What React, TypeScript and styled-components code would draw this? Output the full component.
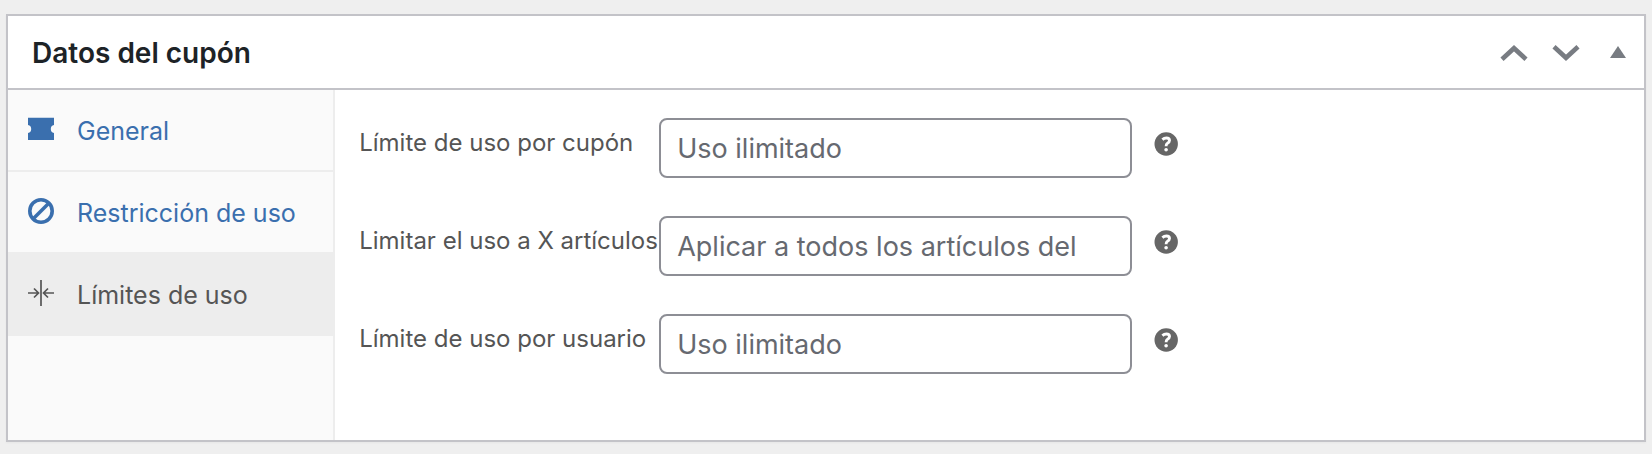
import React, { useState } from "react";
import styled, { createGlobalStyle } from "styled-components";

const GlobalStyle = createGlobalStyle`
  *, *::before, *::after { box-sizing: border-box; }
  body {
    margin: 0;
    background: #efefef;
    color: #555;
    font-family: Inter, "Liberation Sans", sans-serif;
    font-size: 26px;
  }
`;

const Page = styled.main`
  padding: 14px 6px 12px;
`;

const Panel = styled.section`
  background: #fff;
  border: 2px solid #c3c3c8;
  box-shadow: 0 1px 2px rgba(0, 0, 0, 0.04);
`;

const PanelHeader = styled.header`
  display: flex;
  align-items: center;
  justify-content: space-between;
  height: 74px;
  padding: 2px 0 0 24px;
  border-bottom: 2px solid #c3c3c8;
`;

const Title = styled.h2`
  margin: 0;
  color: #1d2327;
  font-size: 28px;
  line-height: 36px;
  font-weight: 600;
`;

const Actions = styled.div`
  display: flex;
`;

const IconButton = styled.button`
  display: flex;
  align-items: center;
  justify-content: center;
  width: 52px;
  height: 52px;
  padding: 0;
  border: 0;
  background: none;
  color: #787c82;
  cursor: pointer;
`;

const PanelBody = styled.div`
  display: flex;
  min-height: 350px;
`;

const Tabs = styled.ul`
  flex: 0 0 20%;
  min-width: 320px;
  margin: 0;
  padding: 0;
  list-style: none;
  background: #fafafa;
  border-right: 2px solid #ededed;
`;

const TabLink = styled.a<{ $active: boolean }>`
  display: flex;
  align-items: center;
  gap: 23px;
  height: 82px;
  padding: 2px 20px 0;
  border-bottom: 2px solid #ededed;
  background: ${(p) => (p.$active ? "#ededed" : "transparent")};
  color: ${(p) => (p.$active ? "#555" : "#3a6fae")};
  font-size: 25px;
  line-height: 36px;
  text-decoration: none;
  white-space: nowrap;

  svg {
    flex: none;
    margin-bottom: 4px;
  }
`;

const Form = styled.form`
  flex: 1;
  display: flex;
  flex-direction: column;
  gap: 38px;
  padding: 28px 24px;
`;

const Field = styled.div`
  display: grid;
  grid-template-columns: 300px minmax(0, 473px) auto;
  align-items: start;
`;

const Label = styled.label`
  padding-top: 8px;
  font-size: 24px;
  line-height: 34px;
  white-space: nowrap;
`;

const NumberInput = styled.input`
  width: 100%;
  height: 60px;
  padding: 0 16px;
  border: 2px solid #8d8e95;
  border-radius: 8px;
  background: #fff;
  color: #2c3338;
  font-family: inherit;
  font-size: 27px;

  &::placeholder {
    color: #666970;
    opacity: 1;
  }
`;

const HelpButton = styled.button`
  display: flex;
  margin: 14px 0 0 22px;
  padding: 0;
  border: 0;
  background: none;
  color: #666;
  cursor: help;
`;

const TicketIcon = () => (
  <svg width="26" height="26" viewBox="0 0 26 26" fill="currentColor" aria-hidden="true">
    <path d="M0 1.700h26v7.400a4.100 4.100 0 0 0 0 8V24H0v-6.900a4.100 4.100 0 0 0 0-8z" />
  </svg>
);

const BanIcon = () => (
  <svg width="26" height="26" viewBox="0 0 26 26" fill="none" stroke="currentColor" strokeWidth="3.6" aria-hidden="true">
    <circle cx="13" cy="13" r="11.2" />
    <path d="M5.5 20.5l15-15" />
  </svg>
);

const LimitIcon = () => (
  <svg width="26" height="26" viewBox="0 0 26 26" fill="none" stroke="currentColor" strokeWidth="1.7" aria-hidden="true">
    <path d="M13 0v26M0 13h10M6 8.5l4.5 4.5L6 17.5M26 13H16M20 8.5L15.5 13l4.500 4.500" />
  </svg>
);

const ChevronIcon = ({ down = false }: { down?: boolean }) => (
  <svg width="28" height="16" viewBox="0 0 28 16" fill="none" stroke="currentColor" strokeWidth="4.600" aria-hidden="true">
    <path d={down ? "M2 1.800L14 12.800L26 1.800" : "M2 14.200L14 3.200L26 14.200"} />
  </svg>
);

const TriangleIcon = () => (
  <svg width="16" height="14" viewBox="0 0 16 14" fill="currentColor" aria-hidden="true">
    <path d="M8 0l8 12H0z" />
  </svg>
);

const HelpIcon = () => (
  <svg width="24" height="24" viewBox="0 0 24 24" aria-hidden="true">
    <circle cx="12.200" cy="12" r="11.700" fill="currentColor" />
    <path
      d="M8.400 7.600Q10.200 6 12.400 6Q15.500 6 15.500 8.600Q15.500 10.100 13.500 11.200Q12.100 12 12.100 14.200"
      fill="none"
      stroke="#fff"
      strokeWidth="2.900"
    />
    <circle cx="12.100" cy="17.700" r="1.800" fill="#fff" />
  </svg>
);

const tabs = [
  { id: "general", text: "General", Icon: TicketIcon },
  { id: "restriccion", text: "Restricción de uso", Icon: BanIcon },
  { id: "limites", text: "Límites de uso", Icon: LimitIcon },
];

const fields = [
  { id: "usage_limit", label: "Límite de uso por cupón", placeholder: "Uso ilimitado" },
  { id: "limit_items", label: "Limitar el uso a X artículos", placeholder: "Aplicar a todos los artículos del" },
  { id: "limit_user", label: "Límite de uso por usuario", placeholder: "Uso ilimitado" },
];

export default function App() {
  const [active, setActive] = useState("limites");

  return (
    <>
      <GlobalStyle />
      <Page>
        <Panel>
          <PanelHeader>
            <Title>Datos del cupón</Title>
            <Actions>
              <IconButton type="button" aria-label="Subir">
                <ChevronIcon />
              </IconButton>
              <IconButton type="button" aria-label="Bajar">
                <ChevronIcon down />
              </IconButton>
              <IconButton type="button" aria-label="Plegar panel">
                <TriangleIcon />
              </IconButton>
            </Actions>
          </PanelHeader>
          <PanelBody>
            <Tabs>
              {tabs.map(({ id, text, Icon }) => (
                <li key={id}>
                  <TabLink href={`#${id}`} $active={id === active} onClick={() => setActive(id)}>
                    <Icon />
                    <span>{text}</span>
                  </TabLink>
                </li>
              ))}
            </Tabs>
            <Form>
              {fields.map((field) => (
                <Field key={field.id}>
                  <Label htmlFor={field.id}>{field.label}</Label>
                  <NumberInput id={field.id} type="text" inputMode="numeric" placeholder={field.placeholder} />
                  <HelpButton type="button" aria-label="Ayuda">
                    <HelpIcon />
                  </HelpButton>
                </Field>
              ))}
            </Form>
          </PanelBody>
        </Panel>
      </Page>
    </>
  );
}
